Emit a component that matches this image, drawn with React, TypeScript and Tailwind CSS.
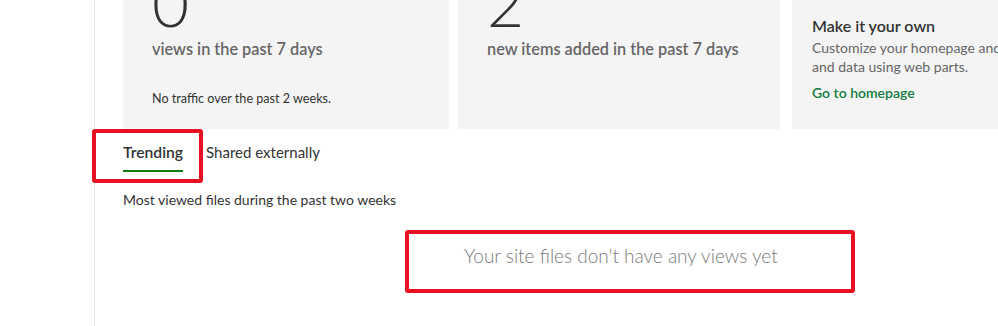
type StatCardProps = {
  value: string;
  label: string;
  note?: string;
  className?: string;
};

function StatCard({ value, label, note, className = "" }: StatCardProps) {
  return (
    <div className={`bg-[#f4f4f4] pl-[29px] overflow-hidden ${className}`}>
      <div className="-mt-[29px] text-[64px] leading-[64px] font-light text-[#333]">{value}</div>
      <div className="mt-[3px] text-[16.3px] leading-[22px] font-semibold text-[#666] whitespace-nowrap">{label}</div>
      {note && <div className="mt-[31px] text-[12.6px] leading-[16px] text-[#333]">{note}</div>}
    </div>
  );
}

export default function App() {
  return (
    <div className="relative w-[998px] h-[326px] overflow-hidden bg-white font-['Lato',sans-serif] text-[#333]">
      <div className="flex h-full">
        <div className="w-[95px] shrink-0 border-r border-[#eaeaea]" />
        <main className="flex-1 min-w-0 pl-[28px]">
          <div className="flex h-[129px]">
            <StatCard className="w-[326px]" value="0" label="views in the past 7 days" note="No traffic over the past 2 weeks." />
            <StatCard className="w-[322px] ml-[9px]" value="2" label="new items added in the past 7 days" />
            <div className="ml-[12px] flex-1 bg-[#f4f4f4] pl-[20px] pt-[16px] overflow-hidden whitespace-nowrap">
              <div className="text-[16px] leading-[20px] font-semibold text-[#333]">Make it your own</div>
              <div className="mt-[2px] text-[14px] leading-[19px] text-[#666]">
                <div>Customize your homepage and</div>
                <div>and data using web parts.</div>
              </div>
              <a className="mt-[7px] block text-[14px] leading-[19px] font-semibold text-[#107c41]">Go to homepage</a>
            </div>
          </div>

          <div className="mt-[13px] flex items-start text-[15px] leading-[20px]">
            <div className="flex flex-col">
              <span className="font-semibold text-[15.7px] text-[#333] pb-[8px]">Trending</span>
              <span className="h-[2px] bg-[#107c10]" />
            </div>
            <span className="ml-[23px] text-[#333]">Shared externally</span>
          </div>

          <div className="mt-[19px] text-[14px] leading-[18px] text-[#333]">
            Most viewed files during the past two weeks
          </div>

          <div className="mt-[34px] pl-[341px] text-[19px] leading-[26px] font-light text-[#7a7a7a] whitespace-nowrap">
            Your site files don't have any views yet
          </div>
        </main>
      </div>

      {/* annotation boxes */}
      <div className="absolute left-[92px] top-[129px] w-[111px] h-[54px] border-4 border-[#e81123] rounded-[3px]" />
      <div className="absolute left-[405px] top-[230px] w-[450px] h-[63px] border-4 border-[#e81123] rounded-[3px]" />
    </div>
  );
}
